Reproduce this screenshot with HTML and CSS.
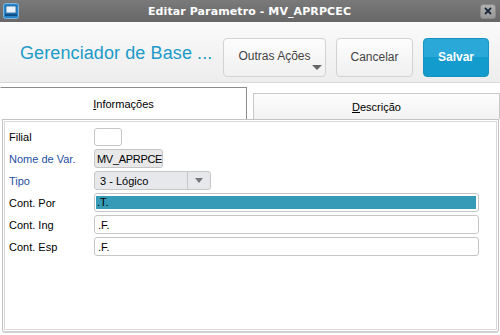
FILE: index.html
```html
<!DOCTYPE html>
<html>
<head>
    <title>Editar Parametro</title>
    <link rel="stylesheet" href="styles.css">
</head>
<body>
    <div class="window">
        <div class="titlebar">
            <span class="app-icon">
                <svg width="16" height="16" viewBox="0 0 16 16">
                    <rect x="0.5" y="0.5" width="15" height="15" rx="2" fill="#2a86c8" stroke="#7fb6e0"/>
                    <rect x="3" y="3" width="10" height="7" fill="#e8f2fa" stroke="#1c5f96" stroke-width="0.8"/>
                    <rect x="2" y="11" width="12" height="2" fill="#0d4f86"/>
                </svg>
            </span>
            <span class="title">Editar Parametro - MV_APRPCEC</span>
            <span class="close">
                <svg width="8" height="8" viewBox="0 0 8 8">
                    <path d="M1 1 L7 7 M7 1 L1 7" stroke="#1b2a3a" stroke-width="1.8"/>
                </svg>
            </span>
        </div>

        <div class="header">
            <h1>Gerenciador de Base ...</h1>
            <div class="actions">
                <button class="btn btn-more">Outras Ações<span class="caret"></span></button>
                <button class="btn btn-cancel">Cancelar</button>
                <button class="btn btn-save">Salvar</button>
            </div>
        </div>

        <div class="tabs">
            <div class="tab active"><u>I</u>nformações</div>
            <div class="tab"><u>D</u>escrição</div>
        </div>

        <div class="panel">
            <div class="row">
                <label>Filial</label>
                <span class="field f-filial"></span>
            </div>
            <div class="row">
                <label class="req">Nome de Var.</label>
                <span class="field f-var">MV_APRPCE</span>
            </div>
            <div class="row">
                <label class="req">Tipo</label>
                <span class="field f-select">3 - Lógico<span class="sel-btn"><span class="sel-caret"></span></span></span>
            </div>
            <div class="row">
                <label>Cont. Por</label>
                <span class="field f-wide"><span class="selected">.T.</span></span>
            </div>
            <div class="row">
                <label>Cont. Ing</label>
                <span class="field f-wide">.F.</span>
            </div>
            <div class="row">
                <label>Cont. Esp</label>
                <span class="field f-wide">.F.</span>
            </div>
        </div>
    </div>
</body>
</html>
```

FILE: styles.css
```css
body {
    margin: 0;
    font-family: "Liberation Sans", Arial, sans-serif;
    background: #fff;
}
.window {
    width: 500px;
    height: 335px;
    overflow: hidden;
    display: flex;
    flex-direction: column;
}
.titlebar {
    height: 22px;
    background: linear-gradient(#7a7a7a, #676767);
    display: flex;
    align-items: center;
    padding: 0 4px 0 3px;
}
.app-icon {
    width: 16px;
    height: 16px;
    display: flex;
}
.title {
    flex: 1;
    text-align: center;
    color: #fff;
    font-family: "DejaVu Sans", sans-serif;
    font-weight: bold;
    font-size: 11px;
    letter-spacing: 0.1px;
}
.close {
    width: 16px;
    height: 15px;
    border: 1px solid #8a8a8a;
    border-radius: 3px;
    background: linear-gradient(#b0b0b0, #999);
    display: flex;
    align-items: center;
    justify-content: center;
    box-sizing: border-box;
}
.header {
    height: 60px;
    background: linear-gradient(#fafafa, #ededed);
    border-bottom: 1px solid #d8d8d8;
    display: flex;
    align-items: center;
    justify-content: space-between;
    padding: 0 11px 0 20px;
}
h1 {
    margin: 0;
    font-weight: normal;
    font-size: 18px;
    letter-spacing: 0.1px;
    color: #1c9bc9;
    padding-top: 3px;
}
.actions {
    display: flex;
    gap: 10px;
    padding-top: 10px;
}
.btn {
    height: 39px;
    border: 1px solid #d2d2d2;
    border-radius: 4px;
    background: linear-gradient(#fdfdfd, #f0f0f0);
    font-family: "Liberation Sans", Arial, sans-serif;
    font-size: 12px;
    color: #444;
    padding: 0;
    position: relative;
}
.btn-more {
    width: 103px;
    padding-bottom: 2px;
}
.caret {
    position: absolute;
    right: 3px;
    bottom: 6px;
    border-left: 5px solid transparent;
    border-right: 5px solid transparent;
    border-top: 5px solid #666;
}
.btn-cancel {
    width: 77px;
}
.btn-save {
    width: 66px;
    border-color: #1592c0;
    background: linear-gradient(#2aa9d9 50%, #129bcc 50%);
    color: #fff;
    font-weight: bold;
}
.tabs {
    display: flex;
    align-items: flex-end;
    height: 36px;
    gap: 6px;
    font-size: 11px;
    color: #000;
}
.tab {
    height: 25px;
    width: 245px;
    border: 1px solid #c8c8c8;
    border-bottom: none;
    background: linear-gradient(#fdfdfd, #f2f2f2);
    display: flex;
    align-items: center;
    justify-content: center;
}
.tab.active {
    height: 31px;
    border-color: #8c8c8c;
    border-left-color: #fff;
    background: #fff;
}
.panel {
    flex: 1;
    margin: 0 1px 2px 2px;
    border: 1px solid #c4c4c4;
    box-shadow: inset 0 0 0 1px #fff, inset 0 0 0 2px #dadada;
    border-radius: 0 0 3px 3px;
    padding: 7px 19px 0 6px;
    display: flex;
    flex-direction: column;
    gap: 3px;
    border-bottom: 2px solid #d0d0d0;
}
.row {
    display: flex;
    align-items: center;
    height: 19px;
    font-size: 11px;
}
label {
    width: 85px;
    color: #000;
}
label.req {
    color: #1f4fa6;
}
.field {
    height: 19px;
    box-sizing: border-box;
    border: 1px solid #c6c6c6;
    border-radius: 3px;
    background: #fff;
    display: flex;
    align-items: center;
    padding: 0 3px;
    font-size: 11px;
    color: #000;
    position: relative;
}
.f-filial {
    width: 28px;
    height: 18px;
}
.f-var {
    width: 69px;
    background: #e8e8e8;
    padding: 0 2px;
    letter-spacing: -0.3px;
    white-space: nowrap;
}
.f-select {
    width: 117px;
    background: #e6e8ec;
    padding-left: 5px;
}
.sel-btn {
    position: absolute;
    right: 0;
    top: 0;
    bottom: 0;
    width: 22px;
    border-left: 1px solid #c6c6c6;
    display: flex;
    align-items: center;
    justify-content: center;
}
.sel-caret {
    border-left: 4px solid transparent;
    border-right: 4px solid transparent;
    border-top: 5px solid #777;
}
.f-wide {
    flex: 1;
}
.selected {
    position: absolute;
    left: 1px;
    top: 2px;
    bottom: 2px;
    right: 2px;
    background: #359bb6;
    padding-left: 1px;
    line-height: 13px;
}
```
